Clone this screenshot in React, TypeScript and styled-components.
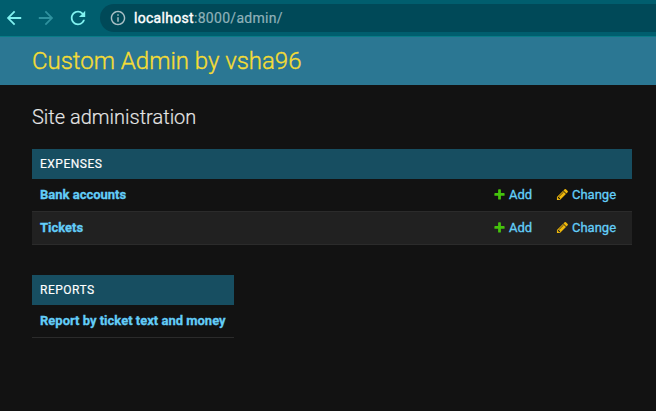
import React from "react";
import styled, { createGlobalStyle } from "styled-components";

const GlobalStyle = createGlobalStyle`
  * { box-sizing: border-box; }
  html, body { margin: 0; background: #121212; }
  body { font-family: Roboto, "Open Sans", sans-serif; overflow: hidden; }
`;

const Page = styled.div`
  width: 656px;
  height: 411px;
  background: #121212;
`;

const BrowserBar = styled.div`
  height: 37px;
  display: flex;
  align-items: flex-start;
  background: #005e6e;
  border-bottom: 1px solid #087c87;
`;

const NavButtons = styled.div`
  display: flex;
  gap: 14px;
  padding: 9px 0 0 5px;
  width: 100px;
`;

const NavIcon = styled.svg<{ $dim?: boolean }>`
  width: 18px;
  height: 18px;
  flex: none;
  fill: ${(p) => (p.$dim ? "#2f929f" : "#80f2f0")};
`;

const AddressBar = styled.div`
  flex: 1;
  height: 28px;
  margin-top: 4px;
  padding-left: 10px;
  display: flex;
  align-items: center;
  gap: 8px;
  border-radius: 14px 0 0 14px;
  background: #004958;
`;

const InfoIcon = styled.svg`
  width: 16px;
  height: 16px;
  fill: #a9bfc5;
`;

const Url = styled.span`
  font-size: 14px;
  line-height: 20px;
  letter-spacing: 0.3px;
  color: #8fb1b9;
  -webkit-text-stroke: 0.2px #8fb1b9;
`;

const Host = styled.span`
  color: #fff;
  -webkit-text-stroke: 0.4px #fff;
`;

const SiteHeader = styled.header`
  height: 48px;
  padding: 0 32px;
  display: flex;
  align-items: center;
  background: #2b7793;
`;

const SiteName = styled.h1`
  margin: 0;
  font-size: 24px;
  line-height: 28px;
  font-weight: 300;
  letter-spacing: -0.02px;
  color: #f5dd35;
  -webkit-text-stroke: 0.35px #f5dd35;
`;

const Content = styled.main`
  padding: 20px 24px 0 32px;
`;

const Title = styled.h2`
  margin: 0 0 20px;
  font-size: 20px;
  line-height: 24px;
  font-weight: 300;
  color: #e6e6e6;
  -webkit-text-stroke: 0.15px #e6e6e6;
`;

const Module = styled.section<{ $width: number }>`
  width: ${(p) => p.$width}px;
  margin-bottom: 30px;
`;

const Caption = styled.h3`
  margin: 0;
  height: 30px;
  padding: 0 8px;
  font-size: 12px;
  line-height: 30px;
  font-weight: 400;
  letter-spacing: 0.5px;
  text-transform: uppercase;
  color: #fff;
  -webkit-text-stroke: 0.15px #fff;
  background: #174e61;
`;

const Row = styled.div<{ $shaded?: boolean; $height: number }>`
  height: ${(p) => p.$height}px;
  padding: 0 16px 1px 8px;
  display: flex;
  align-items: center;
  border-bottom: 1px solid #2b2b2b;
  background: ${(p) => (p.$shaded ? "#212121" : "#121212")};
`;

const ModelLink = styled.a`
  flex: 1;
  white-space: nowrap;
  font-size: 13px;
  line-height: 16px;
  font-weight: 700;
  color: #63cdf8;
  -webkit-text-stroke: 0.3px #63cdf8;
`;

const Action = styled.a<{ $width: number }>`
  width: ${(p) => p.$width}px;
  display: flex;
  align-items: center;
  gap: 3px;
  font-size: 13px;
  line-height: 16px;
  color: #63cdf8;
  -webkit-text-stroke: 0.3px #63cdf8;
`;

const ActionIcon = styled.svg<{ $color: string }>`
  width: 13px;
  height: 13px;
  flex: none;
  fill: ${(p) => p.$color};
`;

const PLUS =
  "M1600 796v192q0 40-28 68t-68 28h-416v416q0 40-28 68t-68 28h-192q-40 0-68-28t-28-68v-416h-416q-40 0-68-28t-28-68v-192q0-40 28-68t68-28h416v-416q0-40 28-68t68-28h192q40 0 68 28t28 68v416h416q40 0 68 28t28 68z";
const PENCIL =
  "M491 1536l91-91-235-235-91 91v107h128v128h107zm523-928q0-22-22-22-10 0-17 7l-542 542q-7 7-7 17 0 22 22 22 10 0 17-7l542-542q7-7 7-17zm-54-192l416 416-832 832h-416v-416zm683 96q0 53-37 90l-166 166-416-416 166-165q36-38 90-38 53 0 91 38l235 234q37 39 37 91z";

const ModelRow = ({ name, shaded }: { name: string; shaded?: boolean }) => (
  <Row $shaded={shaded} $height={33}>
    <ModelLink>{name}</ModelLink>
    <Action $width={63}>
      <ActionIcon $color="#45c20c" viewBox="0 0 1792 1792"><path d={PLUS} /></ActionIcon>
      Add
    </Action>
    <Action $width={60}>
      <ActionIcon $color="#efb80b" viewBox="0 0 1792 1792">
        <path d={PENCIL} />
        <path d="M400 1190L1010 580" fill="none" stroke="#70530b" strokeWidth="90" />
      </ActionIcon>
      Change
    </Action>
  </Row>
);

export default function App() {
  return (
    <Page>
      <GlobalStyle />
      <BrowserBar>
        <NavButtons>
          <NavIcon viewBox="2 2 20 20">
            <path d="M20 11H7.83l5.59-5.59L12 4l-8 8 8 8 1.41-1.41L7.83 13H20v-2z" />
          </NavIcon>
          <NavIcon $dim viewBox="2 2 20 20">
            <path d="M12 4l-1.41 1.41L16.17 11H4v2h12.17l-5.58 5.59L12 20l8-8z" />
          </NavIcon>
          <NavIcon viewBox="2 2 20 20">
            <path d="M17.65 6.35A7.958 7.958 0 0 0 12 4c-4.42 0-7.99 3.58-7.99 8s3.57 8 7.99 8c3.73 0 6.84-2.55 7.73-6h-2.08A5.99 5.99 0 0 1 12 18c-3.31 0-6-2.69-6-6s2.69-6 6-6c1.66 0 3.14.69 4.22 1.78L13 11h7V4l-2.35 2.35z" />
          </NavIcon>
        </NavButtons>
        <AddressBar>
          <InfoIcon viewBox="1 1 22 22">
            <path d="M11 7h2v2h-2zm0 4h2v6h-2zm1-9C6.48 2 2 6.48 2 12s4.48 10 10 10 10-4.48 10-10S17.52 2 12 2zm0 18c-4.41 0-8-3.59-8-8s3.59-8 8-8 8 3.59 8 8-3.59 8-8 8z" />
          </InfoIcon>
          <Url><Host>localhost</Host>:8000/admin/</Url>
        </AddressBar>
      </BrowserBar>
      <SiteHeader>
        <SiteName>Custom Admin by vsha96</SiteName>
      </SiteHeader>
      <Content>
        <Title>Site administration</Title>
        <Module $width={600}>
          <Caption>Expenses</Caption>
          <ModelRow name="Bank accounts" />
          <ModelRow name="Tickets" shaded />
        </Module>
        <Module $width={202}>
          <Caption>Reports</Caption>
          <Row $height={33}>
            <ModelLink>Report by ticket text and money</ModelLink>
          </Row>
        </Module>
      </Content>
    </Page>
  );
}
